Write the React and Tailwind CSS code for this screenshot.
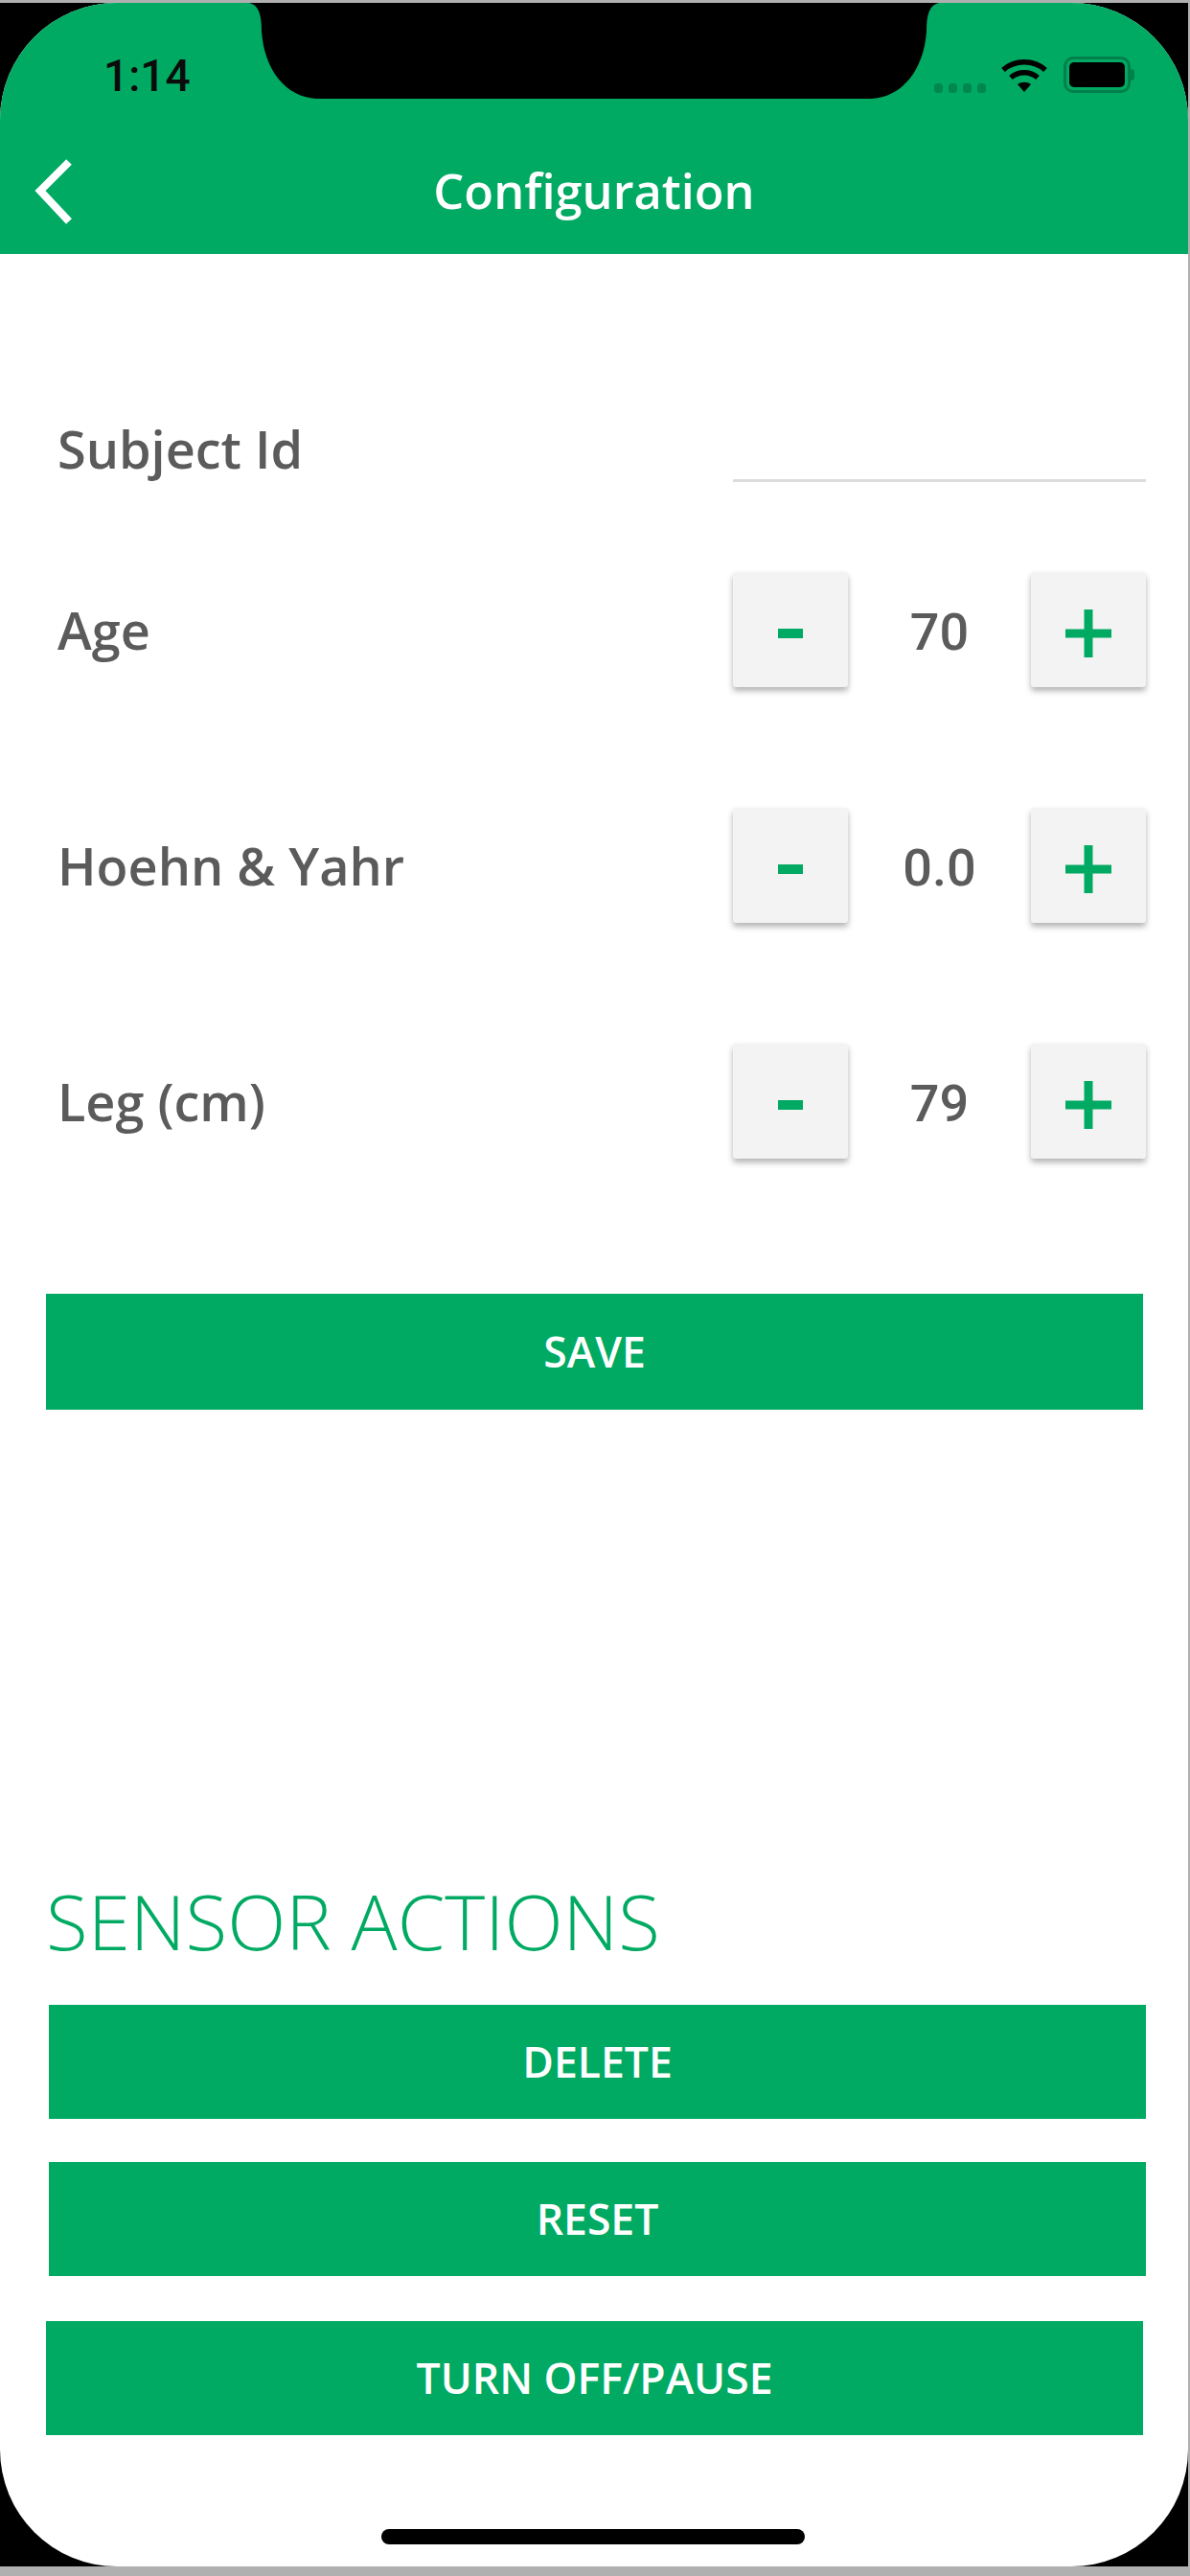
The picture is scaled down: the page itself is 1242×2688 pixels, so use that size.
const G = "bg-[#00aa63]";

function Notch() {
  return (
    <svg className="absolute left-[260px] top-0" width="720" height="102" viewBox="0 0 720 102">
      <path d="M0 0 C10 2 13 12 13 30 C16 70 38 98 70 100 L650 100 C682 98 704 70 707 30 C707 12 710 2 720 0 Z" fill="#000" />
    </svg>
  );
}

function Status() {
  return (
    <div className="flex h-[155px] items-start justify-between pl-[108px] pr-[56px] pt-[49px]">
      <span className="font-['Roboto',sans-serif] text-[46px] font-medium leading-[54px] text-[#0b0b0b]">1:14</span>
      <div className="flex items-center pt-[6px]">
        <svg width="56" height="12" viewBox="0 0 56 12" className="mt-[28px] mr-[13px]">
          {[0, 15, 30, 45].map((x) => (
            <rect key={x} x={x} y="1" width="9" height="10" rx="3.5" fill="#00874f" />
          ))}
        </svg>
        <svg width="50" height="38" viewBox="0 0 50 38" className="mr-[16px]">
          <path d="M3 14 C15 3 35 3 47 14" fill="none" stroke="#000" strokeWidth="5.5" />
          <path d="M11 22 C19 15 31 15 39 22" fill="none" stroke="#000" strokeWidth="5.5" />
          <path d="M18 29 C22 26 28 26 32 29 L25 37 Z" fill="#000" />
        </svg>
        <div className="flex items-center">
          <div className="h-[38px] w-[70px] rounded-[10px] border-[3px] border-[#00804a] p-[3px]">
            <div className="h-full w-full rounded-[5px] bg-black" />
          </div>
          <div className="h-[12px] w-[4px] rounded-r bg-[#00804a]" />
        </div>
      </div>
    </div>
  );
}

function Header() {
  return (
    <header className={`relative h-[262px] shrink-0 ${G}`}>
      <Notch />
      <Status />
      <div className="relative flex h-[107px] items-center justify-center pb-[24px]">
        <svg width="40" height="68" viewBox="0 0 40 68" className="absolute left-[36px] top-[8px]">
          <path d="M36 3 L6 33 L36 65" fill="none" stroke="#fff" strokeWidth="8" />
        </svg>
        <span className="font-['Open_Sans',sans-serif] text-[50.5px] font-semibold leading-none text-white">Configuration</span>
      </div>
    </header>
  );
}

function StepButton({ children }) {
  return (
    <button className="flex h-[120px] w-[120px] items-center justify-center rounded-[3px] bg-[#f3f3f3] pt-[8px] text-[#00aa63] shadow-[0_4px_6px_rgba(0,0,0,0.3)]">
      {children}
    </button>
  );
}

function Stepper({ value }) {
  return (
    <div className="flex w-[431px] items-center justify-between">
      <StepButton>
        <span className="h-[10px] w-[26px] bg-[#00aa63]" />
      </StepButton>
      <span className="pt-[4px] font-['Roboto',sans-serif] text-[54px] font-medium text-[#5b5b5b]">{value}</span>
      <StepButton>
        <svg width="48" height="50" viewBox="0 0 48 50">
          <path d="M24 0 V50 M0 25 H48" stroke="#00aa63" strokeWidth="9" />
        </svg>
      </StepButton>
    </div>
  );
}

function Row({ label, value, className }) {
  return (
    <div className={`flex h-[120px] items-center justify-between pl-[60px] pr-[44px] ${className}`}>
      <span className="font-['Open_Sans',sans-serif] text-[54px] font-semibold leading-none text-[#5b5b5b]">{label}</span>
      <Stepper value={value} />
    </div>
  );
}

function Action({ children, className }) {
  return (
    <button className={`flex h-[119px] items-center justify-center font-['Open_Sans',sans-serif] text-[44.5px] font-semibold text-white ${G} ${className}`}>
      {children}
    </button>
  );
}

export default function App() {
  return (
    <div className="flex h-[2688px] w-[1242px] flex-col bg-[#b0b0b0]">
      <div className="mt-[3px] mr-[2px] h-[2675px] shrink-0 overflow-hidden bg-black">
        <div className="relative flex h-full flex-col overflow-hidden rounded-[122px] bg-white">
          <Header />
          <main className="flex flex-1 flex-col">
            <div className="mt-[176px] flex items-end justify-between pl-[60px] pr-[44px]">
              <span className="mb-[8px] font-['Open_Sans',sans-serif] text-[54px] font-semibold leading-none text-[#5b5b5b]">Subject Id</span>
              <div className="h-[3px] w-[431px] bg-[#dcdcdc]" />
            </div>
            <Row label="Age" value="70" className="mt-[94px]" />
            <Row label="Hoehn & Yahr" value="0.0" className="mt-[126px]" />
            <Row label="Leg (cm)" value="79" className="mt-[126px]" />
            <Action className="mt-[141px] ml-[48px] mr-[47px] h-[121px]">SAVE</Action>
            <h2 className="mt-[481px] pl-[48px] font-['Open_Sans',sans-serif] text-[80px] font-light leading-[104px] text-[#00aa63]">SENSOR ACTIONS</h2>
            <Action className="mt-[36px] ml-[51px] mr-[44px]">DELETE</Action>
            <Action className="mt-[45px] ml-[51px] mr-[44px]">RESET</Action>
            <Action className="mt-[47px] ml-[48px] mr-[47px]">TURN OFF/PAUSE</Action>
          </main>
          <div className="absolute bottom-[23px] left-[398px] h-[16px] w-[442px] rounded-full bg-black" />
        </div>
      </div>
    </div>
  );
}
